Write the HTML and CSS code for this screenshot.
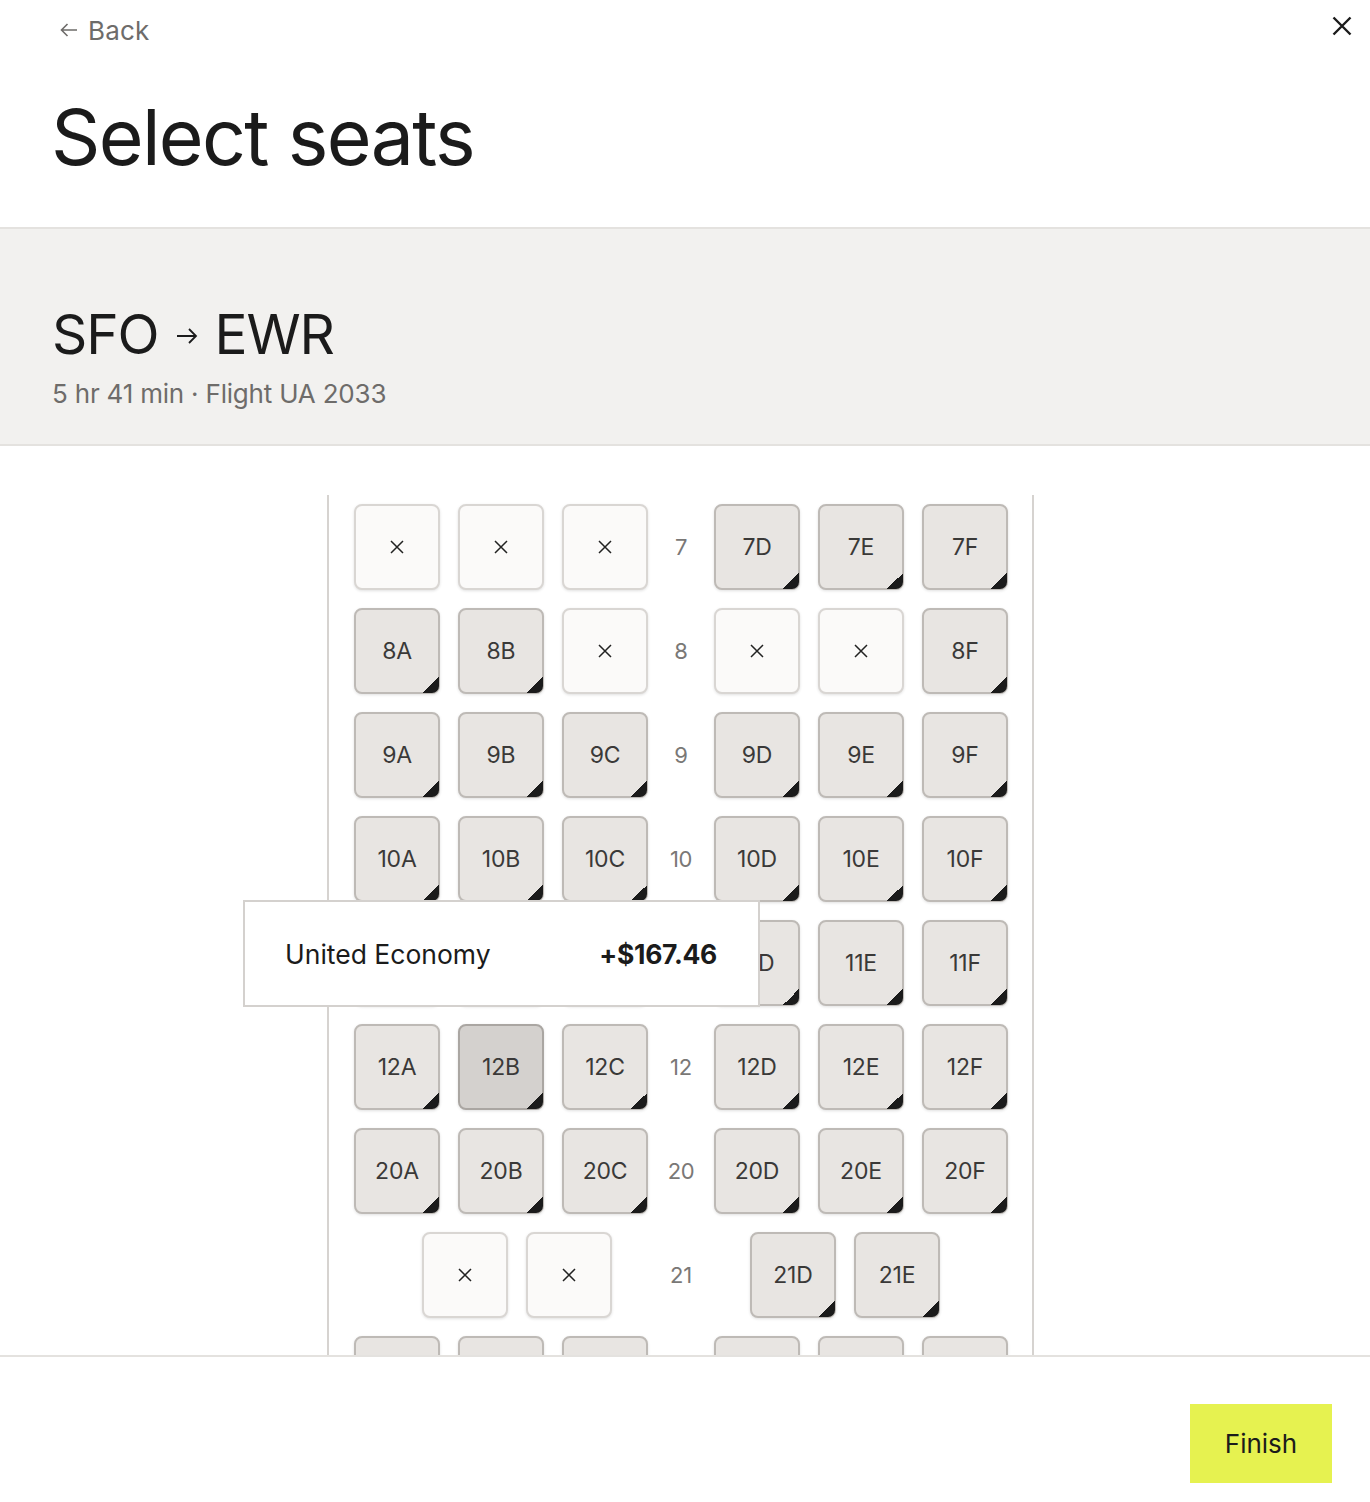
FILE: index.html
```html
<!DOCTYPE html>
<html lang="en">
<head>
    <meta charset="UTF-8">
    <meta name="viewport" content="width=device-width, initial-scale=1.0">
    <title>Select seats</title>
    <link rel="stylesheet" href="styles.css">
</head>
<body>
    <div class="page">
        <!-- Header -->
        <header class="header">
            <div class="header-top">
                <a class="back-link" href="#">
                    <svg width="18" height="14" viewBox="0 0 18 14" fill="none" stroke="currentColor" stroke-width="1.6">
                        <path d="M17 7H1.5M7.5 1L1.5 7l6 6"/>
                    </svg>
                    Back
                </a>
                <button class="close-btn" aria-label="Close">
                    <svg width="20" height="20" viewBox="0 0 20 20" fill="none" stroke="currentColor" stroke-width="2.4">
                        <path d="M1.5 1.5l17 17M18.5 1.5l-17 17"/>
                    </svg>
                </button>
            </div>
            <h1 class="title">Select seats</h1>
        </header>

        <!-- Flight summary -->
        <section class="route">
            <h2 class="route-name">
                SFO
                <svg class="route-arrow" width="22" height="16" viewBox="0 0 22 16" fill="none" stroke="currentColor" stroke-width="1.8">
                    <path d="M1 8h19M13 1l7 7-7 7"/>
                </svg>
                EWR
            </h2>
            <p class="route-meta">5 hr 41 min · Flight UA 2033</p>
        </section>

        <!-- Seat map -->
        <main class="map-area">
            <div class="seat-map" id="seatMap">
                <div class="tooltip">
                    <span>United Economy</span>
                    <span class="tooltip-price">+$167.46</span>
                </div>
            </div>
        </main>

        <!-- Footer -->
        <footer class="footer">
            <button class="finish-btn">Finish</button>
        </footer>
    </div>

    <script>
        const seatMapEl = document.getElementById('seatMap');

        // x = taken seat, s = selected, anything else is free
        const rows = [
            { num: 7, left: ['7A:x', '7B:x', '7C:x'], right: ['7D', '7E', '7F'] },
            { num: 8, left: ['8A', '8B', '8C:x'], right: ['8D:x', '8E:x', '8F'] },
            { num: 9, left: ['9A', '9B', '9C'], right: ['9D', '9E', '9F'] },
            { num: 10, left: ['10A', '10B', '10C'], right: ['10D', '10E', '10F'] },
            { num: 11, left: ['11A', '11B', '11C'], right: ['11D', '11E', '11F'] },
            { num: 12, left: ['12A', '12B:s', '12C'], right: ['12D', '12E', '12F'] },
            { num: 20, left: ['20A', '20B', '20C'], right: ['20D', '20E', '20F'] },
            { num: 21, left: ['21B:x', '21C:x'], right: ['21D', '21E'], inset: true },
            { num: 22, left: ['22A', '22B', '22C'], right: ['22D', '22E', '22F'] },
            { num: 23, left: ['23A', '23B', '23C'], right: ['23D', '23E', '23F'] }
        ];

        const crossIcon = `
            <svg width="16" height="16" viewBox="0 0 16 16" fill="none" stroke="currentColor" stroke-width="1.5">
                <path d="M2 2l12 12M14 2L2 14"/>
            </svg>`;

        function seatHtml(code) {
            const [label, state] = code.split(':');
            if (state === 'x') {
                return `<div class="seat seat-taken">${crossIcon}</div>`;
            }
            const cls = state === 's' ? 'seat seat-free seat-selected' : 'seat seat-free';
            return `<div class="${cls}">${label}</div>`;
        }

        seatMapEl.insertAdjacentHTML('beforeend', rows.map(row => `
            <div class="seat-row${row.inset ? ' seat-row-inset' : ''}">
                <div class="seat-group seat-group-left">${row.left.map(seatHtml).join('')}</div>
                <div class="row-number">${row.num}</div>
                <div class="seat-group seat-group-right">${row.right.map(seatHtml).join('')}</div>
            </div>
        `).join(''));
    </script>
</body>
</html>
```

FILE: styles.css
```css
:root {
    --text-primary: #1b1b1b;
    --text-muted: #6e6c6a;
    --bg-muted: #f2f1ef;
    --line: #e4e2df;
    --seat-free: #e8e5e2;
    --seat-free-border: #bebab6;
    --seat-taken: #fbfaf9;
    --seat-taken-border: #d9d6d3;
    --seat-selected: #d4d1ce;
    --seat-selected-border: #aaa6a2;
    --accent: #e6f250;
}

* {
    box-sizing: border-box;
    margin: 0;
    padding: 0;
}

body {
    font-family: 'Inter', 'Noto Sans', sans-serif;
    color: var(--text-primary);
    background-color: #ffffff;
}

.page {
    display: flex;
    flex-direction: column;
    height: 100vh;
    overflow: hidden;
}

.header {
    padding: 0 16px 0 54px;
    border-bottom: 2px solid var(--line);
    height: 229px;
}

.header-top {
    display: flex;
    justify-content: space-between;
    align-items: center;
    height: 56px;
    padding-top: 4px;
}

.back-link {
    display: flex;
    align-items: center;
    gap: 10px;
    padding-left: 6px;
    font-size: 26px;
    letter-spacing: 0.2px;
    color: var(--text-muted);
    text-decoration: none;
}

.close-btn {
    background: none;
    border: none;
    color: #1b1b1b;
    width: 24px;
    height: 24px;
    display: flex;
    align-items: center;
    justify-content: center;
    margin-top: -8px;
}

.title {
    font-size: 77px;
    font-weight: 400;
    letter-spacing: -1.7px;
    line-height: 1;
    margin-top: 43px;
    margin-left: -3px;
}

.route {
    background-color: var(--bg-muted);
    border-bottom: 2px solid var(--line);
    height: 217px;
    padding: 78px 54px 0;
}

.route-name {
    display: flex;
    align-items: center;
    gap: 17px;
    font-size: 55px;
    font-weight: 400;
    letter-spacing: -1.1px;
    line-height: 1;
    margin-left: -2px;
}

.route-arrow {
    margin-top: 2px;
}

.route-meta {
    margin-top: 16px;
    font-size: 26px;
    color: var(--text-muted);
    letter-spacing: -0.2px;
    margin-left: -2px;
}

.map-area {
    flex: 1;
    overflow: hidden;
    padding-top: 49px;
}

.seat-map {
    position: relative;
    width: 707px;
    margin-left: 327px;
    padding: 9px 24px 0 25px;
    border-left: 2px solid #d6d3d0;
    border-right: 2px solid #d6d3d0;
    display: flex;
    flex-direction: column;
    gap: 18px;
}

.seat-row {
    display: flex;
    gap: 18px;
}

.seat-group {
    display: flex;
    gap: 18px;
    width: 294px;
}

.seat-group-left {
    justify-content: flex-end;
}

.seat-row-inset .seat-group-left {
    padding-right: 36px;
}

.seat-row-inset .seat-group-right {
    padding-left: 36px;
}

.row-number {
    width: 30px;
    display: flex;
    align-items: center;
    justify-content: center;
    font-size: 22px;
    color: #7a7876;
    letter-spacing: -0.3px;
}

.seat {
    position: relative;
    width: 86px;
    height: 86px;
    border-radius: 8px;
    display: flex;
    align-items: center;
    justify-content: center;
    font-size: 23px;
    letter-spacing: -0.2px;
    color: #3a3938;
    box-shadow: 0 1px 3px rgba(0,0,0,0.12);
}

.seat-taken {
    background-color: var(--seat-taken);
    border: 2px solid var(--seat-taken-border);
    color: #222;
}

.seat-free {
    background-color: var(--seat-free);
    border: 2px solid var(--seat-free-border);
}

.seat-free::after {
    content: '';
    position: absolute;
    right: -1px;
    bottom: -1px;
    width: 16px;
    height: 16px;
    background: linear-gradient(135deg, transparent 50%, #1b1b1b 50%);
    border-bottom-right-radius: 7px;
}

.seat-selected {
    background-color: var(--seat-selected);
    border-color: var(--seat-selected-border);
}

.tooltip {
    position: absolute;
    left: -86px;
    top: 405px;
    width: 517px;
    height: 107px;
    background-color: #ffffff;
    border: 2px solid #d4d1ce;
    display: flex;
    align-items: center;
    justify-content: space-between;
    padding: 0 41px 0 40px;
    font-size: 26.5px;
    letter-spacing: 0;
    z-index: 2;
}

.tooltip-price {
    font-weight: 700;
    letter-spacing: -0.3px;
}

.footer {
    border-top: 2px solid var(--line);
    height: 147px;
    flex-shrink: 0;
    display: flex;
    justify-content: flex-end;
    padding: 47px 38px 0 0;
}

.finish-btn {
    width: 142px;
    height: 79px;
    background-color: var(--accent);
    border: none;
    font-family: inherit;
    font-size: 26px;
    color: var(--text-primary);
}
```
